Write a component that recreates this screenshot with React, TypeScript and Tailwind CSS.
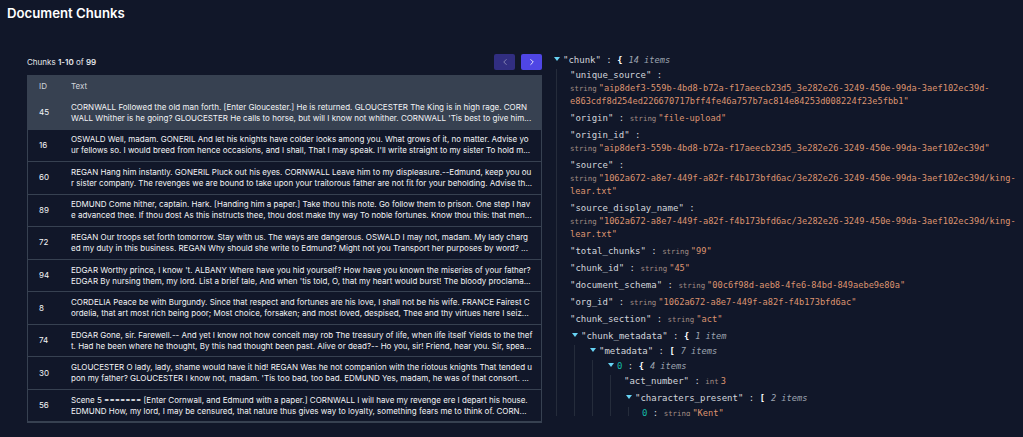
import { ChevronLeft, ChevronRight } from "lucide-react";
import type { ReactNode } from "react";

const rows = [
  { id: 45, lines: ["CORNWALL Followed the old man forth. [Enter Gloucester.] He is returned. GLOUCESTER The King is in high rage. CORN", "WALL Whither is he going? GLOUCESTER He calls to horse, but will I know not whither. CORNWALL 'Tis best to give him..."] },
  { id: 16, lines: ["OSWALD Well, madam. GONERIL And let his knights have colder looks among you. What grows of it, no matter. Advise yo", "ur fellows so. I would breed from hence occasions, and I shall, That I may speak. I'll write straight to my sister To hold m..."] },
  { id: 60, lines: ["REGAN Hang him instantly. GONERIL Pluck out his eyes. CORNWALL Leave him to my displeasure.--Edmund, keep you ou", "r sister company. The revenges we are bound to take upon your traitorous father are not fit for your beholding. Advise th..."] },
  { id: 89, lines: ["EDMUND Come hither, captain. Hark. [Handing him a paper.] Take thou this note. Go follow them to prison. One step I hav", "e advanced thee. If thou dost As this instructs thee, thou dost make thy way To noble fortunes. Know thou this: that men..."] },
  { id: 72, lines: ["REGAN Our troops set forth tomorrow. Stay with us. The ways are dangerous. OSWALD I may not, madam. My lady charg", "ed my duty in this business. REGAN Why should she write to Edmund? Might not you Transport her purposes by word? ..."] },
  { id: 94, lines: ["EDGAR Worthy prince, I know 't. ALBANY Where have you hid yourself? How have you known the miseries of your father?", "EDGAR By nursing them, my lord. List a brief tale, And when 'tis told, O, that my heart would burst! The bloody proclama..."] },
  { id: 8, lines: ["CORDELIA Peace be with Burgundy. Since that respect and fortunes are his love, I shall not be his wife. FRANCE Fairest C", "ordelia, that art most rich being poor; Most choice, forsaken; and most loved, despised, Thee and thy virtues here I seiz..."] },
  { id: 74, lines: ["EDGAR Gone, sir. Farewell.-- And yet I know not how conceit may rob The treasury of life, when life itself Yields to the thef", "t. Had he been where he thought, By this had thought been past. Alive or dead?-- Ho you, sir! Friend, hear you. Sir, spea..."] },
  { id: 30, lines: ["GLOUCESTER O lady, lady, shame would have it hid! REGAN Was he not companion with the riotous knights That tended u", "pon my father? GLOUCESTER I know not, madam. 'Tis too bad, too bad. EDMUND Yes, madam, he was of that consort. ..."] },
  { id: 56, lines: ["Scene 5 ======= [Enter Cornwall, and Edmund with a paper.] CORNWALL I will have my revenge ere I depart his house.", "EDMUND How, my lord, I may be censured, that nature thus gives way to loyalty, something fears me to think of. CORN..."] },
];

function Caret() {
  return (
    <svg width="6" height="4" viewBox="0 0 6 4" className="absolute left-[-9px] top-[3px]">
      <path d="M0 0h6L3 4z" fill="#67d4f5" />
    </svg>
  );
}

function Key({ name }: { name: string }) {
  return (
    <>
      <span className="text-[9px] leading-[8px] text-[#d1d5db]">"{name}"</span>
      <span className="text-[9px] leading-[8px] text-[#d1d5db]"> : </span>
    </>
  );
}

function Index() {
  return (
    <>
      <span className="text-[9px] leading-[8px] text-[#14b8a6]">0</span>
      <span className="text-[9px] leading-[8px] text-[#d1d5db]"> : </span>
    </>
  );
}

function Type({ name }: { name: string }) {
  return <span className="mr-[2px] text-[7.4px] leading-[8px] text-[#a08c84]">{name}</span>;
}

function Str({ value }: { value: string }) {
  return (
    <>
      <Type name="string" />
      <span className="leading-[8px] text-[#dd9470]">"{value}"</span>
    </>
  );
}

function Field({ name, value, block }: { name: string; value: string; block?: boolean }) {
  return (
    <div className="pb-[4.2px] leading-[12.9px]">
      <Key name={name} />
      {block && <br />}
      <Str value={value} />
    </div>
  );
}

function Branch({ label, open, count, children }: { label: ReactNode; open: string; count: string; children: ReactNode }) {
  return (
    <div className="pl-[11px]">
      <div className="relative h-[15px] leading-[12.9px]">
        <Caret />
        {label}
        <span className="font-bold leading-[8px] text-white">{open}</span>
        <span className="ml-[6px] italic leading-[8px] text-[#9ca3af]">{count}</span>
      </div>
      <div className="ml-[-7px] border-l border-[#252c3b] pl-[13px]">{children}</div>
    </div>
  );
}

export default function App() {
  return (
    <div className="h-[437px] w-[1023px] overflow-hidden bg-[#111729] font-['Inter',sans-serif] text-white">
      <h1 className="pl-[7px] pt-[3px] text-[13.2px] font-semibold leading-[20px]">Document Chunks</h1>
      <div className="mt-[30px] flex">
        <div className="ml-[27px] w-[515px]">
          <div className="mb-[4px] flex h-[18px] items-center justify-between">
            <span className="text-[8px] text-[#e5e7eb]">
              Chunks <b className="font-semibold">1-10</b> of <b className="font-semibold">99</b>
            </span>
            <div className="flex gap-[6px]">
              <button type="button" className="flex h-[16px] w-[21px] items-center justify-center rounded-[2px] bg-[#312e81] text-[#8f8fb8]">
                <ChevronLeft size={10} />
              </button>
              <button type="button" className="flex h-[16px] w-[21px] items-center justify-center rounded-[2px] bg-[#4f46e5] text-white">
                <ChevronRight size={10} />
              </button>
            </div>
          </div>
          <div className="border-x border-b border-[#374151]">
            <div className="flex h-[22px] items-center bg-[#374151] text-[8px] text-[#d1d5db]">
              <div className="w-[43px] pl-[11px]">ID</div>
              <div>Text</div>
            </div>
            {rows.map((row, i) => (
              <div key={row.id} className={`flex h-[32.55px] items-center border-b border-[#374151] text-[8px] leading-[11px] text-[#f3f4f6] ${i === 0 ? "bg-[#374151]" : ""}`}>
                <div className="w-[43px] shrink-0 pl-[11px]">{row.id}</div>
                <div className="whitespace-nowrap">
                  {row.lines[0]}
                  <br />
                  {row.lines[1]}
                </div>
              </div>
            ))}
          </div>
        </div>
        <div className="ml-[10px] mt-[1px] h-[362px] flex-1 overflow-hidden pr-[6px] font-['DejaVu_Sans_Mono',monospace] text-[8.67px]">
          <Branch label={<Key name="chunk" />} open="{" count="14 items">
            <Field name="unique_source" block value="aip8def3-559b-4bd8-b72a-f17aeecb23d5_3e282e26-3249-450e-99da-3aef102ec39d-e863cdf8d254ed226670717bff4fe46a757b7ac814e84253d008224f23e5fbb1" />
            <Field name="origin" value="file-upload" />
            <Field name="origin_id" block value="aip8def3-559b-4bd8-b72a-f17aeecb23d5_3e282e26-3249-450e-99da-3aef102ec39d" />
            <Field name="source" block value="1062a672-a8e7-449f-a82f-f4b173bfd6ac/3e282e26-3249-450e-99da-3aef102ec39d/king-lear.txt" />
            <Field name="source_display_name" block value="1062a672-a8e7-449f-a82f-f4b173bfd6ac/3e282e26-3249-450e-99da-3aef102ec39d/king-lear.txt" />
            <Field name="total_chunks" value="99" />
            <Field name="chunk_id" value="45" />
            <Field name="document_schema" value="00c6f98d-aeb8-4fe6-84bd-849aebe9e80a" />
            <Field name="org_id" value="1062a672-a8e7-449f-a82f-f4b173bfd6ac" />
            <Field name="chunk_section" value="act" />
            <Branch label={<Key name="chunk_metadata" />} open="{" count="1 item">
              <Branch label={<Key name="metadata" />} open="[" count="7 items">
                <Branch label={<Index />} open="{" count="4 items">
                  <div className="pb-[4.2px] leading-[12.9px]">
                    <Key name="act_number" />
                    <Type name="int" />
                    <span className="leading-[8px] text-[#dd9470]">3</span>
                  </div>
                  <Branch label={<Key name="characters_present" />} open="[" count="2 items">
                    <div className="pb-[4.2px] leading-[12.9px]">
                      <Index />
                      <Str value="Kent" />
                    </div>
                  </Branch>
                </Branch>
              </Branch>
            </Branch>
          </Branch>
        </div>
      </div>
    </div>
  );
}
